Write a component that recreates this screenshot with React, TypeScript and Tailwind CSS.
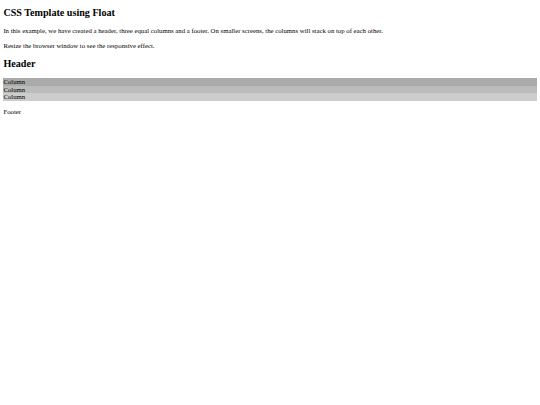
import React from 'react';

const columns = [
  { label: 'Column', bg: 'bg-[#aaa]' },
  { label: 'Column', bg: 'bg-[#bbb]' },
  { label: 'Column', bg: 'bg-[#ccc]' },
];

export default function App() {
  return (
    <div className="min-h-[405px] bg-white px-[3.375px] pt-[7.2px] font-['Liberation_Serif',serif] text-black">
      <h2 className="mb-[8.4px] text-[10.125px] font-bold leading-[11.64px]">CSS Template using Float</h2>
      <p className="mb-[6.75px] text-[6.75px] leading-[7.76px]">
        In this example, we have created a header, three equal columns and a footer. On smaller screens, the columns will stack on top of each other.
      </p>
      <p className="mb-[6.75px] text-[6.75px] leading-[7.76px]">Resize the browser window to see the responsive effect.</p>

      {/* header */}
      <div>
        <h2 className="mt-[8.4px] mb-[8.4px] text-[10.125px] font-bold leading-[11.64px]">Header</h2>
      </div>

      <div className="flex flex-col">
        {columns.map((c, i) => (
          <div key={i} className={`${c.bg} text-[6.75px] leading-[7.7px]`}>
            {c.label}
          </div>
        ))}
      </div>

      <div>
        <p className="mt-[6.75px] text-[6.75px] leading-[7.76px]">Footer</p>
      </div>
    </div>
  );
}
